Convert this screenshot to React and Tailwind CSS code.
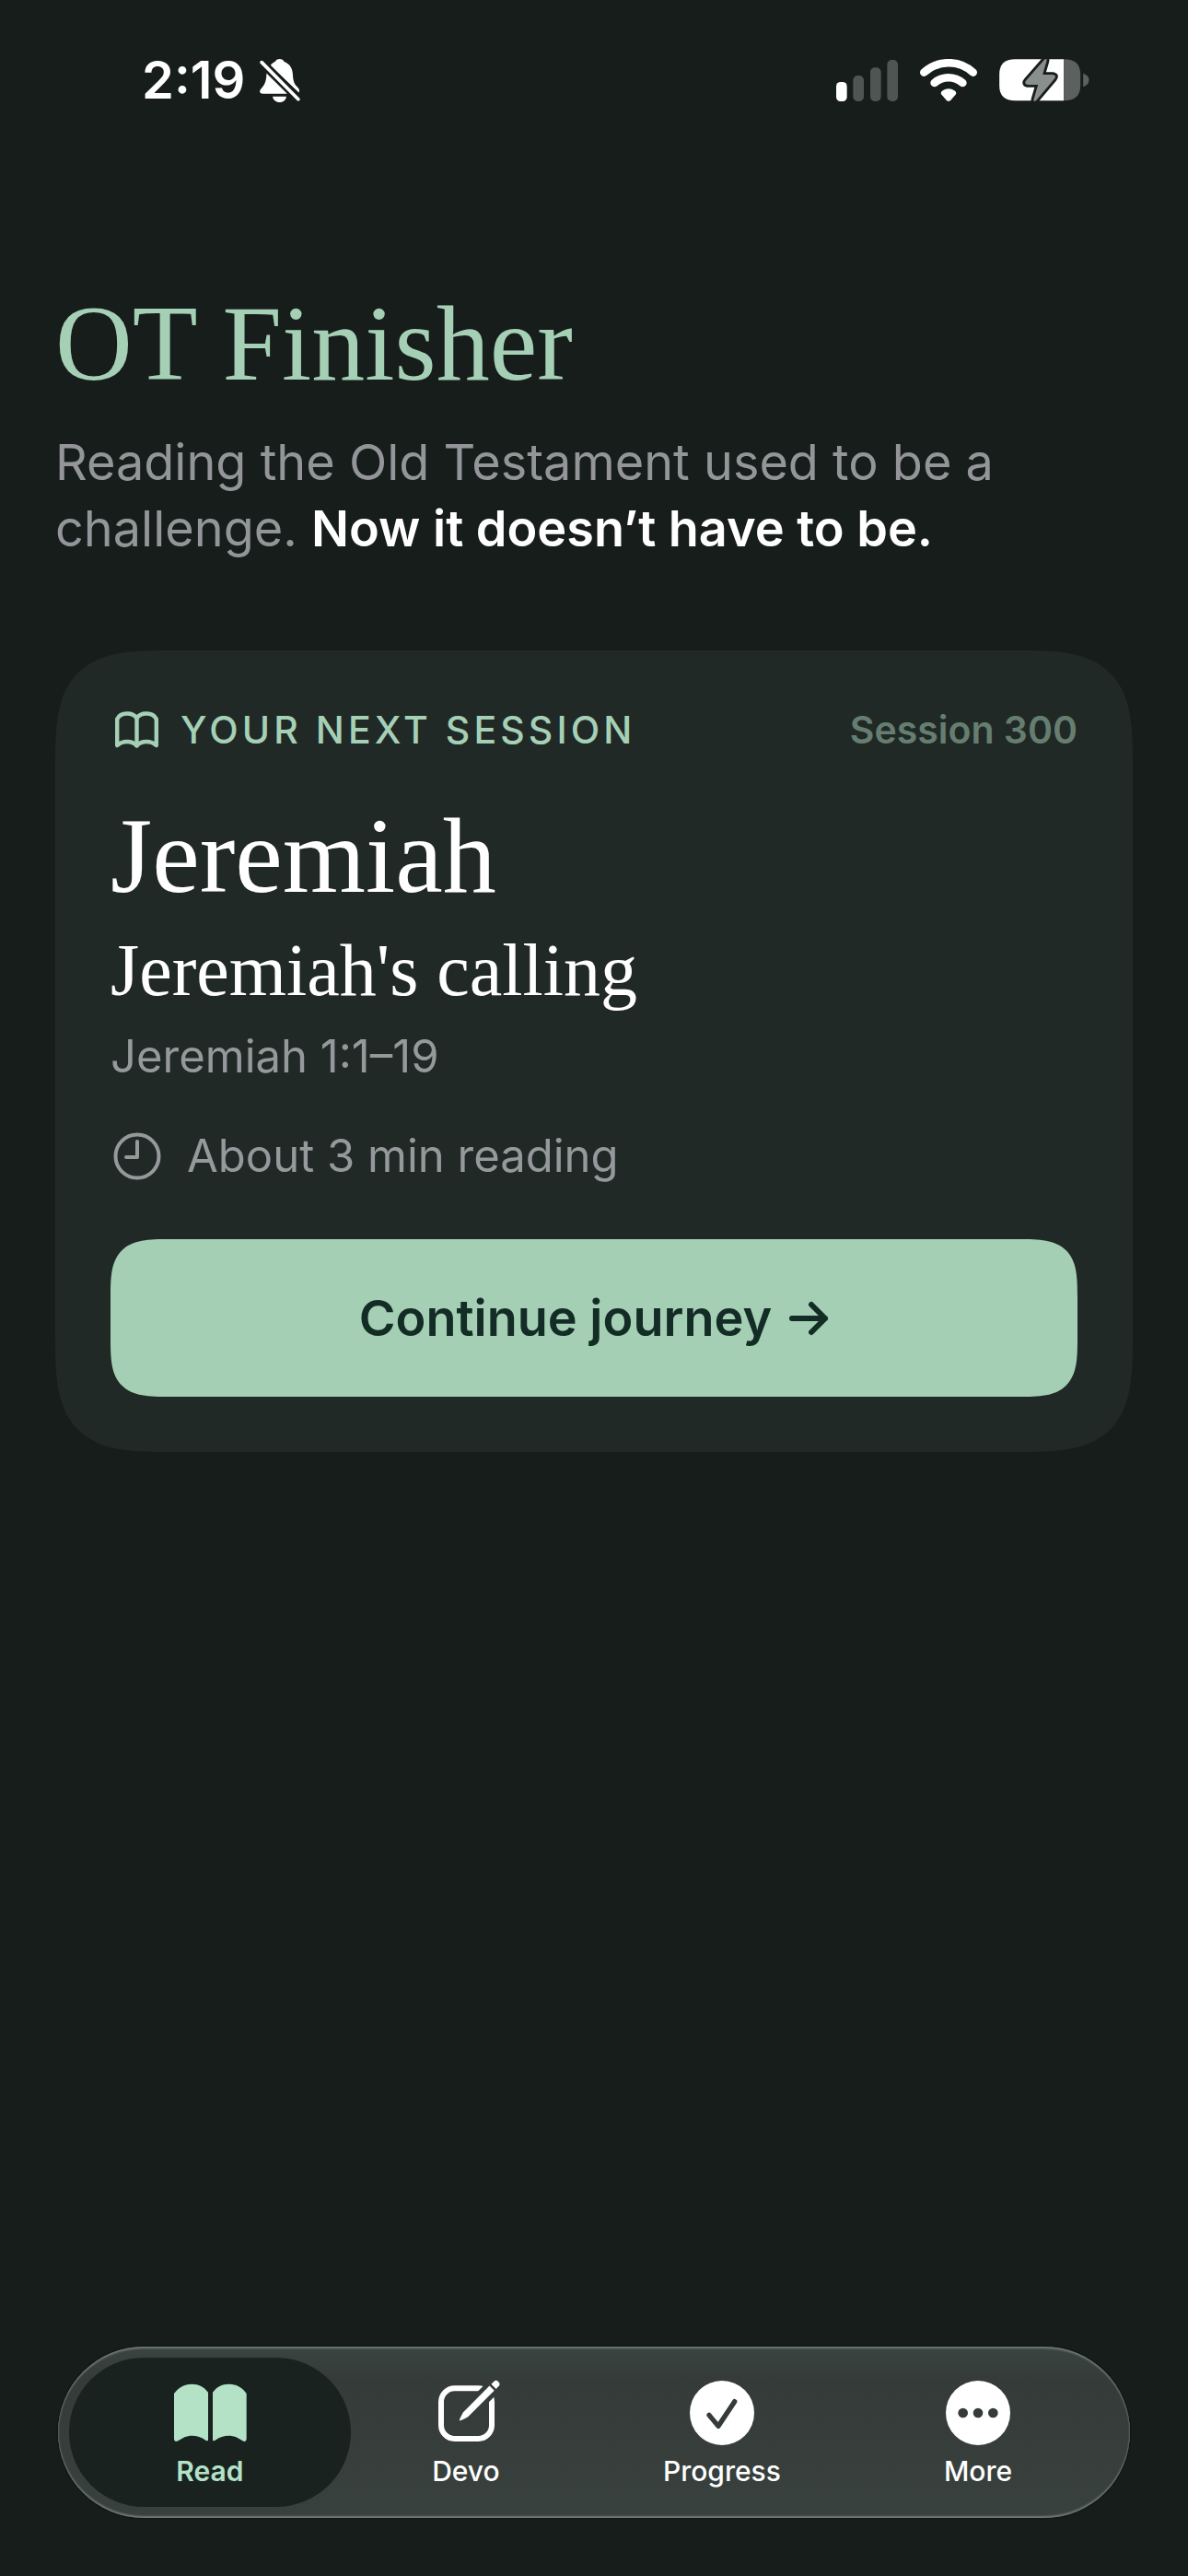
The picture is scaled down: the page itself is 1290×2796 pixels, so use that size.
import clsx from "clsx";

function StatusBar() {
    return (
        <header className="flex items-center justify-between pt-[51px] pl-[154px] pr-[107px]">
            <div className="flex items-center gap-4">
                <time className="text-[56px] leading-[72px] font-semibold text-white">2:19</time>
                <svg viewBox="0 0 132 142" className="w-11 h-[47px]" aria-label="Silent mode">
                    <g fill="#fff">
                        <path d="M34 22 C40 14 45 11 50 9 C53 3 58 0 65 0 C72 0 77 3 80 9 C98 16 107 30 108 50 C109 72 113 82 122 91 C129 98 132 104 128 110 Z" />
                        <path d="M22 47 L90 114 H10 C0 114 -3 106 3 99 C14 86 21 80 22 47 Z" />
                        <path d="M42 123 H87 C86 134 77 142 65 142 C53 142 43 134 42 123 Z" />
                    </g>
                    <path d="M12 16 L122 126" stroke="#171d1b" strokeWidth="27" />
                    <path d="M6 11 L126 132" stroke="#fff" strokeWidth="11" strokeLinecap="round" />
                </svg>
            </div>
            <div className="flex items-center gap-6">
                <svg viewBox="54 48 201 135" className="w-[67px] h-[45px]" aria-label="Signal">
                    <rect x="54" y="120" width="35" height="63" rx="14" fill="#fff" />
                    <g fill="#505553">
                        <rect x="109" y="99" width="35" height="84" rx="15" />
                        <rect x="165" y="73" width="35" height="110" rx="15" />
                        <rect x="220" y="48" width="35" height="135" rx="15" />
                    </g>
                </svg>
                <svg viewBox="328 45 186 138" className="w-[62px] h-[46px]" aria-label="Wi-Fi">
                    <g fill="none" stroke="#fff" strokeLinecap="round">
                        <path d="M341 89 A118 118 0 0 1 501 89" strokeWidth="26" />
                        <path d="M375 123 A70 70 0 0 1 467 123" strokeWidth="26" />
                    </g>
                    <path d="M397 160 Q394 153 402 148 C414 140 428 140 440 148 Q448 153 445 160 L428 179 Q421 186 414 179 Z" fill="#fff" />
                </svg>
                <svg viewBox="588 38 293 144" className="w-[98px] h-12" aria-label="Battery charging">
                    <path d="M640 42 H798 V177 H640 Q588 177 588 128 V91 Q588 42 640 42 Z" fill="#fff" />
                    <path d="M798 42 Q852 42 852 91 V128 Q852 177 798 177 Z" fill="#5c6160" />
                    <path d="M861 88 Q880 94 880 110 Q880 126 861 132 Z" fill="#5c6160" />
                    <path
                        d="M734 44 Q744 36 742 48 L729 92 H762 Q776 94 767 106 L708 176 Q698 184 700 172 L714 125 H680 Q666 122 676 110 Z"
                        fill="#8a8e8c"
                        stroke="#171d1b"
                        strokeWidth="17"
                        paintOrder="stroke"
                    />
                </svg>
            </div>
        </header>
    );
}

function SmallBookIcon() {
    return (
        <svg viewBox="0 0 47 40" className="w-[47px] h-10" fill="none" stroke="currentColor" strokeWidth="4.4" strokeLinejoin="round" strokeLinecap="round">
            <path d="M2.2 37 V8.5 C4 4.5 8 2.5 13 2.5 C18 2.5 21.5 4.5 23.5 7.5 C25.5 4.5 29 2.5 34 2.5 C39 2.5 43 4.5 44.8 8.5 V37 C42 34.5 39 33 34 33 C29 33 26 34.5 23.5 37.5 C21 34.5 18 33 13 33 C8 33 5 34.5 2.2 37 Z" />
            <path d="M23.5 8 V37" />
        </svg>
    );
}

function ClockIcon() {
    return (
        <svg viewBox="0 0 52 52" className="w-[52px] h-[52px]" fill="none" stroke="currentColor" strokeWidth="4" strokeLinecap="round" strokeLinejoin="round">
            <circle cx="26" cy="26" r="23.5" />
            <path d="M26 10 V27 H14" />
        </svg>
    );
}

function ArrowIcon() {
    return (
        <svg viewBox="0 0 44 38" className="w-11 h-[38px]" fill="none" stroke="currentColor" strokeWidth="6" strokeLinecap="round" strokeLinejoin="round">
            <path d="M4 19 H40 M25 4 L40 19 L25 34" />
        </svg>
    );
}

function ReadIcon() {
    return (
        <g fill="currentColor">
            <path d="M18 42 C34 19 56 11 76 11 C98 11 116 20 129 38 V192 Q129 199 121 194 C108 184 92 179 76 179 C58 179 46 186 31 196 Q18 202 18 190 Z" />
            <path d="M254 42 C238 19 216 11 196 11 C174 11 157 20 144 38 V192 Q144 199 152 194 C165 184 181 179 196 179 C214 179 226 186 241 196 Q254 202 254 190 Z" />
        </g>
    );
}

function DevoIcon() {
    return (
        <>
            <mask id="pencil-gap" maskUnits="userSpaceOnUse" x="0" y="-20" width="270" height="240">
                <rect x="0" y="-20" width="270" height="240" fill="#fff" />
                <path d="M130 114 L264 -20" stroke="#000" strokeWidth="50" />
            </mask>
            <rect x="54" y="25" width="165" height="164" rx="44" fill="none" stroke="currentColor" strokeWidth="18" mask="url(#pencil-gap)" />
            <g transform="translate(114 130) rotate(-45)" fill="currentColor">
                <path d="M0 0 Q2 -4 28 -11 H149 V11 H28 Q2 4 0 0 Z" />
                <path d="M157 -11 H168 A11 11 0 0 1 168 11 H157 Z" />
            </g>
        </>
    );
}

function ProgressIcon() {
    return (
        <>
            <circle cx="135" cy="105" r="105" fill="currentColor" />
            <path d="M93 112 L123 148 L176 68" fill="none" stroke="#343b38" strokeWidth="16" strokeLinecap="round" strokeLinejoin="round" />
        </>
    );
}

function MoreIcon() {
    return (
        <>
            <circle cx="135" cy="105" r="105" fill="currentColor" />
            <g fill="#343b38">
                <circle cx="86" cy="105" r="16" />
                <circle cx="135" cy="105" r="16" />
                <circle cx="184" cy="105" r="16" />
            </g>
        </>
    );
}

const tabs = [
    { label: "Read", icon: ReadIcon, active: true },
    { label: "Devo", icon: DevoIcon },
    { label: "Progress", icon: ProgressIcon },
    { label: "More", icon: MoreIcon },
];

function TabBar() {
    return (
        <nav className="mt-auto mx-[63px] mb-[63px] flex rounded-full px-[26px] py-3 bg-linear-to-b from-[#3b4441] via-[#343b38] via-20% to-[#39413e] shadow-[inset_0_2px_2px_#6f7a76,inset_0_-2px_2px_#6f7a76,0_0_2px_#050807]">
            {tabs.map(({ label, icon: Icon, active }) => (
                <a
                    key={label}
                    href="#"
                    aria-current={active ? "page" : undefined}
                    className={clsx(
                        "flex flex-1 flex-col items-center rounded-full pt-[25px] pb-[21px]",
                        active ? "-mx-[14px] grow-[1.1] bg-[#1a2220] text-[#b3e2c7]" : "text-white"
                    )}
                >
                    <svg viewBox="0 0 270 210" className="w-[90px] h-[70px] overflow-visible">
                        <Icon />
                    </svg>
                    <span className={clsx("mt-[10px] text-[30px] leading-[36px]", active ? "font-semibold" : "font-medium")}>
                        {label}
                    </span>
                </a>
            ))}
        </nav>
    );
}

function SessionCard() {
    return (
        <section className="mt-24 rounded-[128px] [corner-shape:superellipse(1.7)] bg-[#212927] p-15">
            <div className="flex items-center justify-between text-[41px] leading-[52px]">
                <div className="flex items-center gap-6 pl-[5px] text-[#a5d0b6]">
                    <SmallBookIcon />
                    <span className="font-medium uppercase tracking-widest">Your next session</span>
                </div>
                <span className="font-semibold text-[#657e70]">Session 300</span>
            </div>
            <h2 className="mt-[51px] font-['Liberation_Serif',serif] text-[116px] leading-[120px] text-white">Jeremiah</h2>
            <h3 className="mt-4 font-['Liberation_Serif',serif] text-[80px] leading-[96px] text-white">Jeremiah's calling</h3>
            <p className="mt-4 text-[49px] leading-[60px] text-[#95999b]">Jeremiah 1:1–19</p>
            <div className="mt-12 flex items-center gap-7 pl-[3px] text-[49px] leading-[60px] text-[#95999b]">
                <ClockIcon />
                <span>About 3 min reading</span>
            </div>
            <button className="mt-15 flex w-full items-center justify-center gap-[18px] rounded-[64px] [corner-shape:superellipse(1.7)] bg-[#a4cfb4] py-12 text-[54px] leading-[75px] font-semibold text-[#132c25]">
                Continue journey
                <ArrowIcon />
            </button>
        </section>
    );
}

function App() {
    return (
        <div className="flex min-h-screen flex-col bg-[#171d1b] font-['Inter',sans-serif]">
            <StatusBar />
            <main className="px-15 pt-[190px]">
                <h1 className="font-['Liberation_Serif',serif] text-[116px] leading-[120px] text-[#a5d0b6]">OT Finisher</h1>
                <p className="mt-[33px] text-[54px] leading-[72px] text-[#949599]">
                    Reading the Old Testament used to be a challenge.{" "}
                    <strong className="font-semibold text-white">Now it doesn’t have to be.</strong>
                </p>
                <SessionCard />
            </main>
            <TabBar />
        </div>
    );
}

export default App;
